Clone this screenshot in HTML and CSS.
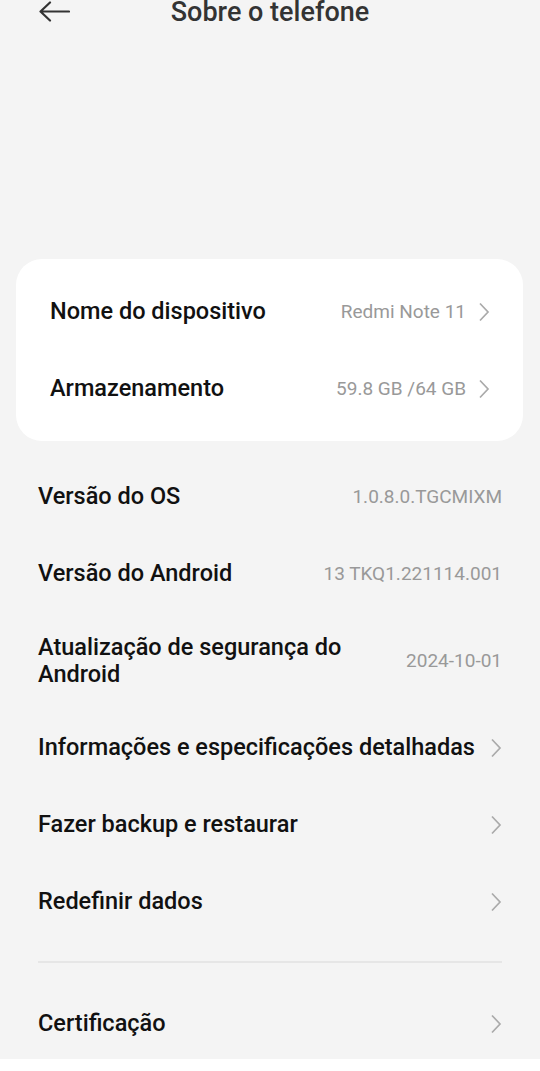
FILE: index.html
```html
<!DOCTYPE html>
<html lang="pt">
<head>
    <meta charset="UTF-8">
    <meta name="viewport" content="width=device-width, initial-scale=1.0">
    <title>Sobre o telefone</title>
    <link rel="stylesheet" href="styles.css">
</head>
<body>
<div class="page">

    <!-- Barra superior -->
    <header class="topbar">
        <svg class="back" width="32" height="22" viewBox="0 0 32 22">
            <path d="M31 10.5H3M12 1.5L2.5 10.5L12 19.5" fill="none" stroke="#333" stroke-width="2.2" stroke-linecap="round" stroke-linejoin="round"/>
        </svg>
        <h1 class="title">Sobre o telefone</h1>
    </header>

    <!-- Cartão branco -->
    <div class="card">
        <div class="row">
            <span class="label">Nome do dispositivo</span>
            <span class="value">Redmi Note 11</span>
            <svg class="chev" width="12" height="20" viewBox="0 0 12 20"><path d="M2 1.5l8 8.5-8 8.5" fill="none" stroke="#aaa" stroke-width="1.7"/></svg>
        </div>
        <div class="row">
            <span class="label">Armazenamento</span>
            <span class="value">59.8 GB /64 GB</span>
            <svg class="chev" width="12" height="20" viewBox="0 0 12 20"><path d="M2 1.5l8 8.5-8 8.5" fill="none" stroke="#aaa" stroke-width="1.7"/></svg>
        </div>
    </div>

    <!-- Lista -->
    <div class="list">
        <div class="row">
            <span class="label">Versão do OS</span>
            <span class="value">1.0.8.0.TGCMIXM</span>
        </div>
        <div class="row">
            <span class="label">Versão do Android</span>
            <span class="value">13 TKQ1.221114.001</span>
        </div>
        <div class="row tall">
            <span class="label">Atualização de segurança do Android</span>
            <span class="value">2024-10-01</span>
        </div>
        <div class="row">
            <span class="label">Informações e especificações detalhadas</span>
            <svg class="chev" width="12" height="20" viewBox="0 0 12 20"><path d="M2 1.5l8 8.5-8 8.5" fill="none" stroke="#aaa" stroke-width="1.7"/></svg>
        </div>
        <div class="row">
            <span class="label">Fazer backup e restaurar</span>
            <svg class="chev" width="12" height="20" viewBox="0 0 12 20"><path d="M2 1.5l8 8.5-8 8.5" fill="none" stroke="#aaa" stroke-width="1.7"/></svg>
        </div>
        <div class="row">
            <span class="label">Redefinir dados</span>
            <svg class="chev" width="12" height="20" viewBox="0 0 12 20"><path d="M2 1.5l8 8.5-8 8.5" fill="none" stroke="#aaa" stroke-width="1.7"/></svg>
        </div>

        <hr class="divider">

        <div class="row">
            <span class="label">Certificação</span>
            <svg class="chev" width="12" height="20" viewBox="0 0 12 20"><path d="M2 1.5l8 8.5-8 8.5" fill="none" stroke="#aaa" stroke-width="1.7"/></svg>
        </div>
    </div>

</div>
</body>
</html>
```

FILE: styles.css
```css
body {
    margin: 0;
    background-color: #fff;
    font-family: Roboto, "Noto Sans", sans-serif;
    color: #111;
}
.page {
    background-color: #f4f4f4;
    height: 1059px;
    overflow: hidden;
}

/* barra superiore */
.topbar {
    display: flex;
    align-items: center;
    height: 24px;
    padding: 0 38px;
}
.back {
    display: block;
    margin-top: -1px;
}
.title {
    flex: 1;
    margin: 0 0 0 -32px;
    text-align: center;
    font-size: 27px;
    font-weight: 500;
    line-height: 24px;
    color: #333;
}

/* cartão */
.card {
    background-color: #fff;
    margin: 235px 17px 0 16px;
    padding: 14px 0;
    border-radius: 26px;
}
.card .row {
    padding: 0 33px 0 34px;
}

.row {
    display: flex;
    align-items: center;
    height: 77px;
    gap: 12px;
}
.row.tall {
    height: 97px;
}
.label {
    flex: 1;
    font-size: 23.5px;
    font-weight: 500;
    line-height: 27px;
    color: #111;
}
.value {
    font-size: 19px;
    color: #999;
}
.chev {
    display: block;
    flex-shrink: 0;
}

/* lista */
.list {
    padding: 17px 38px 0 38px;
}
.list .row.tall .label {
    padding-right: 20px;
}
.divider {
    border: none;
    border-top: 2px solid #e6e6e6;
    margin: 21px 0 22px 0;
}
```
